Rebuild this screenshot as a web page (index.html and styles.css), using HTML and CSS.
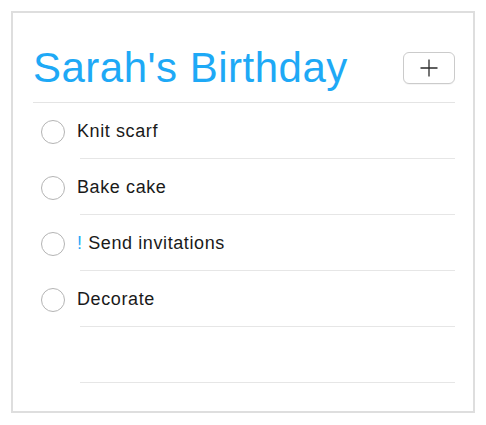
FILE: index.html
```html
<!DOCTYPE html>
<html>
<head>
<meta charset="utf-8">
<link rel="stylesheet" href="styles.css">
</head>
<body>
<div class="card">
  <div class="header">
    <h1 class="title">Sarah's Birthday</h1>
    <button class="add-btn" type="button" aria-label="Add">
      <svg width="18" height="18" viewBox="0 0 18 18"><path d="M9 0.5V17.5M0.5 9H17.5" stroke="#2b2b2b" stroke-width="1.3" fill="none"/></svg>
    </button>
  </div>
  <ul class="list">
    <li class="row"><span class="check"></span><span class="body"><span class="label">Knit scarf</span></span></li>
    <li class="row"><span class="check"></span><span class="body"><span class="label">Bake cake</span></span></li>
    <li class="row"><span class="check"></span><span class="body"><span class="label"><span class="prio">!</span> Send invitations</span></span></li>
    <li class="row"><span class="check"></span><span class="body"><span class="label">Decorate</span></span></li>
    <li class="row empty"><span class="body"></span></li>
  </ul>
</div>
</body>
</html>
```
FILE: styles.css
```css
html, body {
  margin: 0;
  padding: 0;
  background: #ffffff;
}
body {
  font-family: "Liberation Sans", Arial, sans-serif;
}
.card {
  margin: 11px;
  width: 464px;
  box-sizing: border-box;
  border: 2px solid #dedede;
  padding: 0 0 28px 0;
  background: #fff;
}
.header {
  margin: 0 18px 0 20px;
  padding: 31px 0 10px 0;
  border-bottom: 1px solid #e4e4e4;
  display: flex;
  align-items: center;
  justify-content: space-between;
}
.title {
  margin: 0;
  font-size: 42px;
  line-height: 48px;
  font-weight: normal;
  letter-spacing: 0.5px;
  color: #1ea9f6;
}
.add-btn {
  width: 52px;
  height: 32px;
  padding: 0;
  border: 1px solid #cbcbcb;
  border-radius: 6px;
  background: #fff;
  box-shadow: 0 1px 0 rgba(0,0,0,0.04);
  display: flex;
  align-items: center;
  justify-content: center;
}
.add-btn svg { display: block; }
.list {
  list-style: none;
  margin: 0;
  padding: 0;
}
.row {
  display: flex;
  align-items: center;
  height: 56px;
  margin: 0 18px 0 28px;
}
.check {
  flex: none;
  width: 24px;
  height: 24px;
  box-sizing: border-box;
  border: 1.5px solid #b4b4b4;
  border-radius: 50%;
  margin-top: 1px;
}
.body {
  flex: 1;
  align-self: stretch;
  margin-left: 15px;
  border-bottom: 1px solid #e6e6e6;
  display: flex;
  align-items: center;
}
.row.empty .body { margin-left: 39px; }
.label {
  margin-left: -3px;
  font-size: 18px;
  line-height: 20px;
  letter-spacing: 0.6px;
  color: #1a1a1a;
}
.prio {
  color: #1ea9f6;
}
```
